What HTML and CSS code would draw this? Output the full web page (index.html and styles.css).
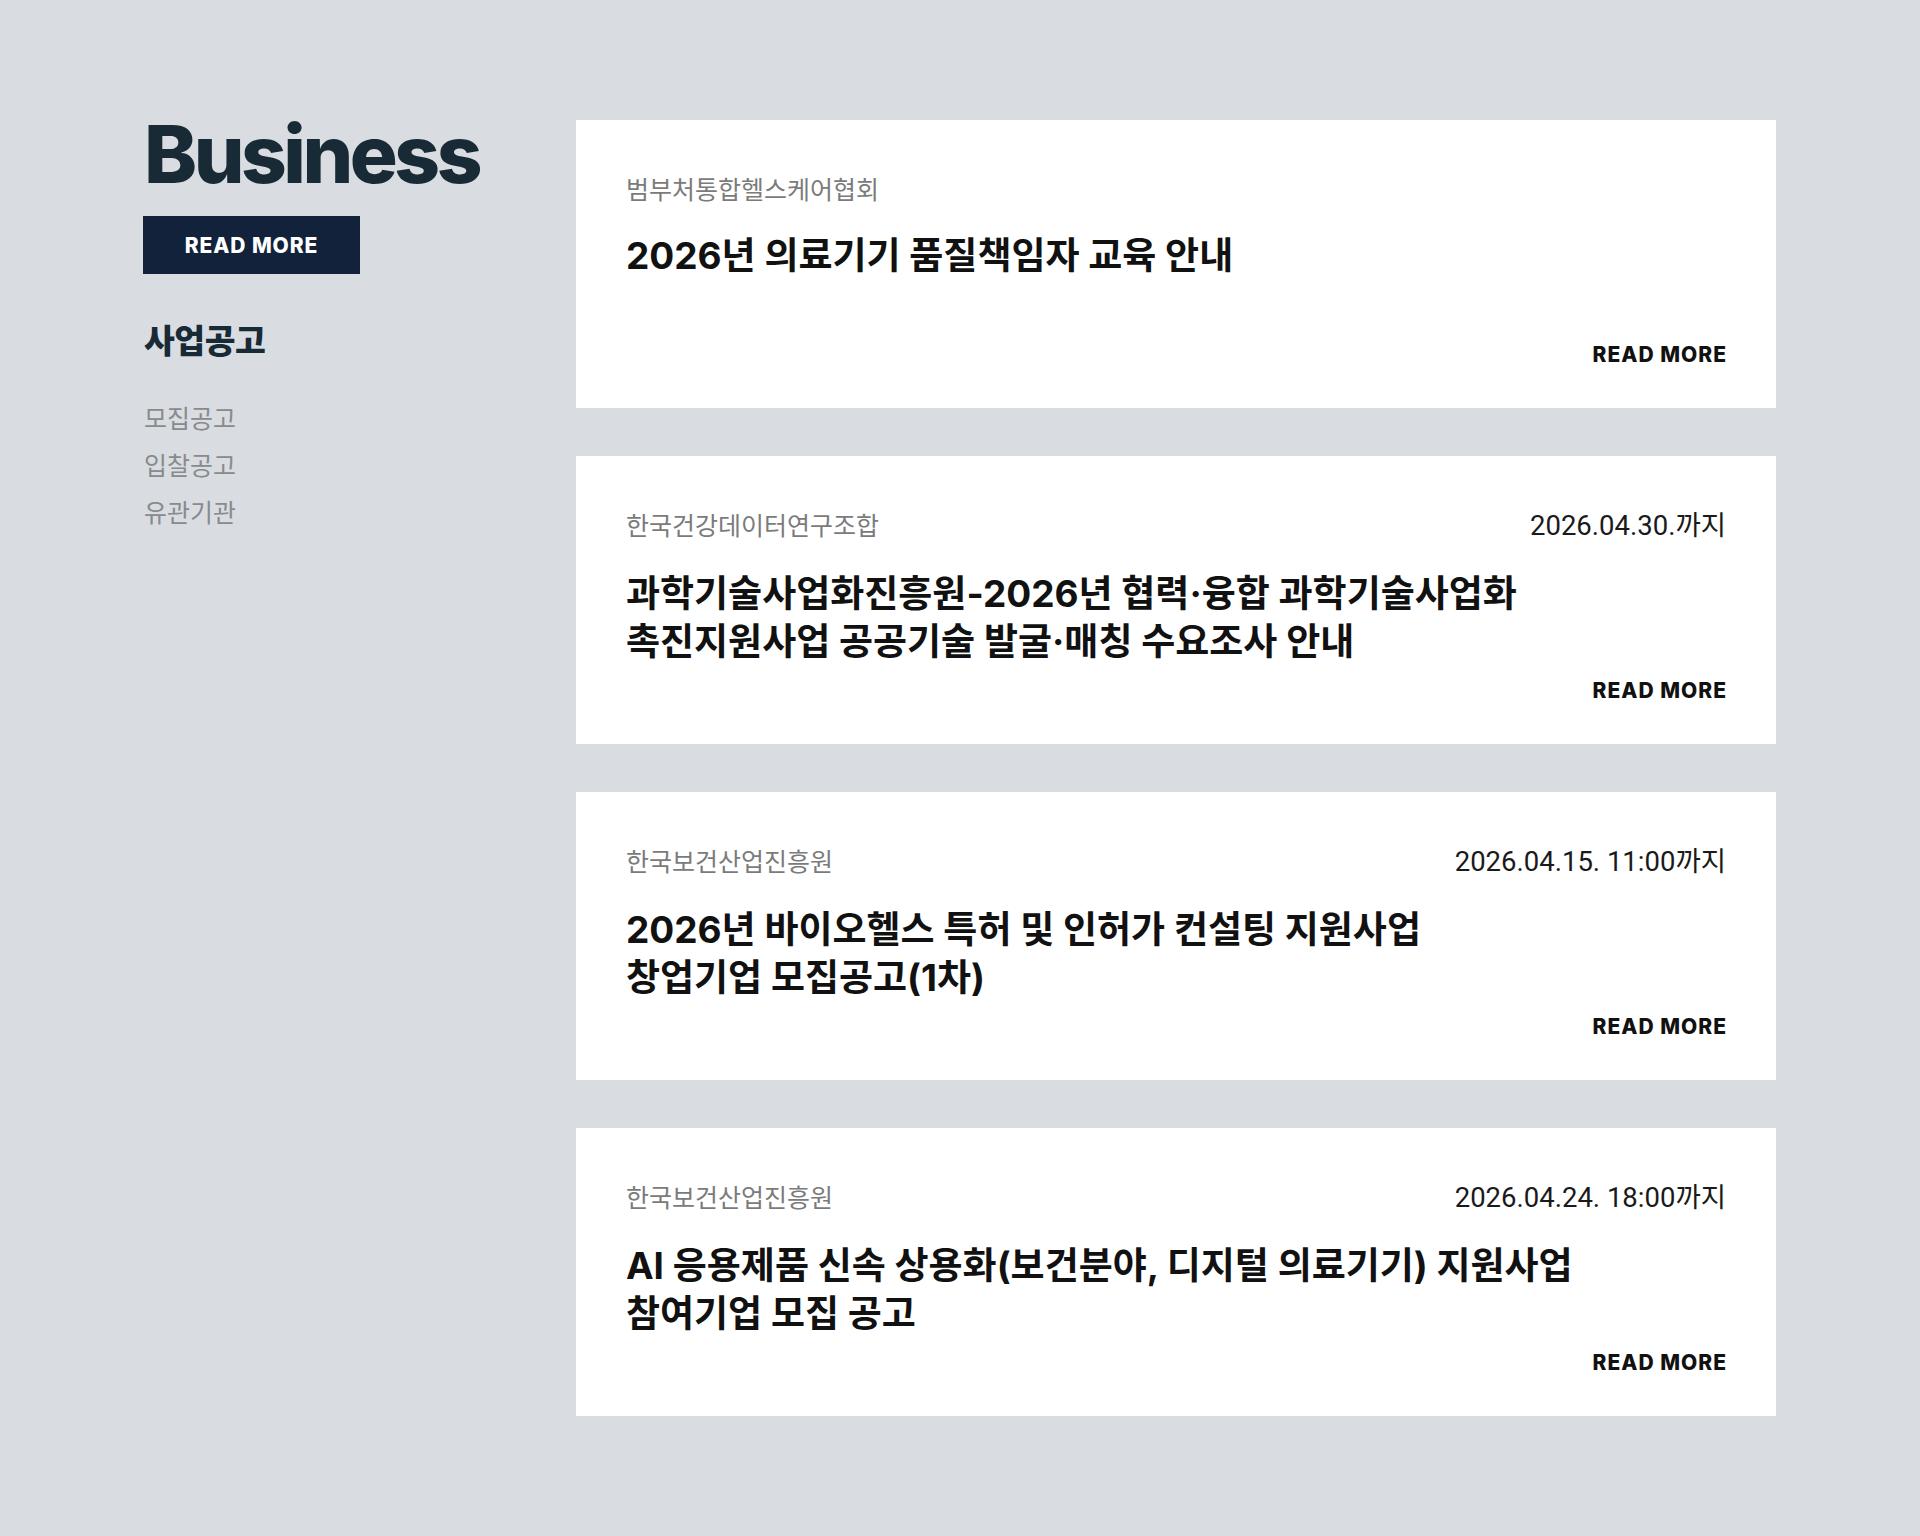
FILE: index.html
```html
<!DOCTYPE html>
<html lang="ko">
<head>
<meta charset="utf-8">
<title>Business</title>
<link rel="stylesheet" href="styles.css">
</head>
<body>
<div class="page">
  <aside class="side">
    <h1 class="brand">Business</h1>
    <a class="btn" href="#">READ MORE</a>
    <h2 class="cat">사업공고</h2>
    <ul class="menu">
      <li>모집공고</li>
      <li>입찰공고</li>
      <li>유관기관</li>
    </ul>
  </aside>
  <main class="list">
    <article class="card">
      <div class="meta"><span class="org">범부처통합헬스케어협회</span></div>
      <h3 class="title">2026년 의료기기 품질책임자 교육 안내</h3>
      <a class="more" href="#">READ MORE</a>
    </article>
    <article class="card">
      <div class="meta"><span class="org">한국건강데이터연구조합</span><span class="date">2026.04.30.까지</span></div>
      <h3 class="title">과학기술사업화진흥원-2026년 협력·융합 과학기술사업화<br>촉진지원사업 공공기술 발굴·매칭 수요조사 안내</h3>
      <a class="more" href="#">READ MORE</a>
    </article>
    <article class="card">
      <div class="meta"><span class="org">한국보건산업진흥원</span><span class="date">2026.04.15. 11:00까지</span></div>
      <h3 class="title">2026년 바이오헬스 특허 및 인허가 컨설팅 지원사업<br>창업기업 모집공고(1차)</h3>
      <a class="more" href="#">READ MORE</a>
    </article>
    <article class="card">
      <div class="meta"><span class="org">한국보건산업진흥원</span><span class="date">2026.04.24. 18:00까지</span></div>
      <h3 class="title">AI 응용제품 신속 상용화(보건분야, 디지털 의료기기) 지원사업<br>참여기업 모집 공고</h3>
      <a class="more" href="#">READ MORE</a>
    </article>
  </main>
</div>
</body>
</html>
```

FILE: styles.css
```css
html, body {
  margin: 0;
  padding: 0;
}
body {
  background: #d9dde1;
  font-family: "Noto Sans CJK KR", sans-serif;
}
.page {
  display: flex;
  width: 1632px;
  margin: 0 auto;
  padding: 120px 0 120px;
}
.side {
  width: 432px;
  flex: none;
}
.brand {
  margin: 0;
  font: 800 80px/68px "Inter", sans-serif;
  letter-spacing: -3.5px;
  color: #172a36;
}
.btn {
  display: flex;
  width: 217px;
  height: 58px;
  margin: 28px 0 0 -1px;
  align-items: center;
  justify-content: center;
  background: #11223a;
  color: #fff;
  text-decoration: none;
  font: 800 21px/1 "Inter", sans-serif;
  letter-spacing: 0.9px;
}
.cat {
  margin: 44px 0 0;
  font: 900 33.5px/42px "Noto Sans CJK KR", sans-serif;
  letter-spacing: -0.5px;
  color: #172a36;
}
.menu {
  list-style: none;
  margin: 34px 0 0;
  padding: 0;
}
.menu li {
  font: 400 25px/47px "Noto Sans CJK KR", sans-serif;
  color: #888b8e;
}
.list {
  width: 1200px;
  flex: none;
  display: flex;
  flex-direction: column;
  gap: 48px;
}
.card {
  height: 288px;
  box-sizing: border-box;
  background: #fff;
  padding: 50px 50px 43px;
  display: flex;
  flex-direction: column;
}
.meta {
  display: flex;
  justify-content: space-between;
  align-items: baseline;
}
.org {
  font: 400 25px/36px "Noto Sans CJK KR", sans-serif;
  color: #7b7b7b;
}
.date {
  font: 400 27.5px/36px "Roboto", "Noto Sans CJK KR", sans-serif;
  color: #1a1a1a;
}
.title {
  margin: 26px 0 0;
  font: 700 37px/48px "Inter", "Noto Sans CJK KR", sans-serif;
  color: #111;
}
.more {
  margin-top: auto;
  margin-right: -1px;
  align-self: flex-end;
  font: 800 21px/21px "Inter", sans-serif;
  letter-spacing: 1px;
  color: #111;
  text-decoration: none;
}
```
